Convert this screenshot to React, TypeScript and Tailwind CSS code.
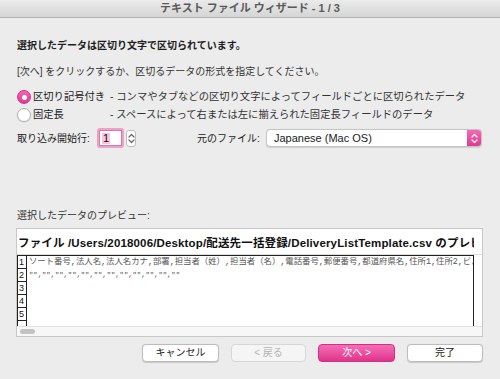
import React from "react";

const FONT = '"Liberation Sans", "Noto Sans CJK JP", sans-serif';
const MONO = '"Liberation Mono", "Noto Sans CJK JP", monospace';

function Radio({ checked }: { checked: boolean }) {
  return checked ? (
    <div className="w-[14px] h-[14px] rounded-full bg-gradient-to-b from-[#f065b0] to-[#e03a93] border border-[#d23088] flex items-center justify-center">
      <div className="w-[5px] h-[5px] rounded-full bg-white" />
    </div>
  ) : (
    <div className="w-[14px] h-[14px] rounded-full bg-white border border-[#b4b4b4] shadow-[0_0.5px_1px_rgba(0,0,0,0.15)]" />
  );
}

function Chevrons({ color }: { color: string }) {
  return (
    <svg width="7" height="11" viewBox="0 0 7 11" fill="none">
      <path d="M1 4 L3.5 1.5 L6 4" stroke={color} strokeWidth="1.2" strokeLinecap="round" strokeLinejoin="round" />
      <path d="M1 7 L3.5 9.5 L6 7" stroke={color} strokeWidth="1.2" strokeLinecap="round" strokeLinejoin="round" />
    </svg>
  );
}

export default function App() {
  const rows = [
    "ソート番号,法人名,法人名カナ,部署,担当者（姓）,担当者（名）,電話番号,郵便番号,都道府県名,住所1,住所2,ビル名,備考",
    '"","","","","","","","","","","",""',
    "",
    "",
    "",
    "",
  ];
  return (
    <div className="w-[500px] h-[379px] bg-[#ececec] flex flex-col overflow-hidden" style={{ fontFamily: FONT }}>
      <div className="h-[18px] shrink-0 bg-gradient-to-b from-[#ebebeb] to-[#d5d5d5] border-b border-[#b3b3b3] flex items-center justify-center text-[11px] font-bold text-[#5a5a5a] leading-none">
        テキスト ファイル ウィザード - 1 / 3
      </div>
      <div className="px-[17px] pt-[21px] flex flex-col">
        <div className="h-[14px] leading-[14px] text-[10px] font-bold text-[#1e1e1e]">
          選択したデータは区切り文字で区切られています。
        </div>
        <div className="mt-[12px] h-[14px] leading-[14px] text-[10px] text-[#333333]">
          [次へ] をクリックするか、区切るデータの形式を指定してください。
        </div>
        <div className="mt-[9px] flex flex-col">
          <div className="h-[18px] flex items-center">
            <div className="w-[93px] flex items-center gap-[2px]">
              <Radio checked />
              <span className="text-[10.3px] text-[#222222]">区切り記号付き</span>
            </div>
            <span className="text-[10.3px] text-[#333333]">- コンマやタブなどの区切り文字によってフィールドごとに区切られたデータ</span>
          </div>
          <div className="h-[18px] flex items-center">
            <div className="w-[93px] flex items-center gap-[2px]">
              <Radio checked={false} />
              <span className="text-[10.3px] text-[#222222]">固定長</span>
            </div>
            <span className="text-[10.3px] text-[#333333]">- スペースによって右または左に揃えられた固定長フィールドのデータ</span>
          </div>
        </div>
        <div className="mt-[4px] h-[20px] flex items-center">
          <span className="w-[80px] text-[10px] text-[#222222]">取り込み開始行:</span>
          <div className="w-[27px] h-[20px] rounded-[3px] bg-[#f0a0c8] p-[2px]">
            <div className="w-full h-full bg-white border border-[#d77aa8] flex items-center pl-[2px]">
              <span className="bg-[#f6c5de] text-[11px] leading-[11px] text-[#111111] px-[1px]">1</span>
            </div>
          </div>
          <div className="ml-[2px] w-[10px] h-[17px] rounded-[3px] bg-white border border-[#bdbdbd] flex items-center justify-center">
            <Chevrons color="#666666" />
          </div>
          <span className="ml-[61px] w-[69px] text-[10px] text-[#222222]">元のファイル:</span>
          <div className="w-[216px] h-[18px] rounded-[4px] bg-white border border-[#c4c4c4] shadow-[0_0.5px_1px_rgba(0,0,0,0.12)] flex items-center overflow-hidden">
            <span className="flex-1 pl-[7px] text-[11px] text-[#222222]">Japanese (Mac OS)</span>
            <div className="w-[14px] h-full bg-gradient-to-b from-[#f26ab4] to-[#e0378f] flex items-center justify-center">
              <Chevrons color="#ffffff" />
            </div>
          </div>
        </div>
        <div className="mt-[61px] h-[14px] leading-[14px] text-[10px] text-[#333333]">
          選択したデータのプレビュー:
        </div>
        <div className="mt-[5px] -ml-px w-[467px] h-[109px] bg-white border border-[#c8c8c8] flex flex-col overflow-hidden">
          <div className="h-[26px] shrink-0 flex items-center pl-px border-b border-[#dddddd]">
            <div className="w-[456px] overflow-hidden whitespace-nowrap">
              <span className="text-[11.5px] tracking-[0.15px] font-bold text-[#111111]">
                ファイル /Users/2018006/Desktop/配送先一括登録/DeliveryListTemplate.csv のプレビュー
              </span>
            </div>
          </div>
          <div className="flex-1 flex min-h-0">
            <div className="w-[457px] border-l border-t border-r border-[#222222] flex flex-col overflow-hidden">
              {rows.map((r, i) => (
                <div key={i} className="h-[13px] shrink-0 flex">
                  <div className={"w-[9px] shrink-0 border-r border-[#222222] text-[9px] leading-[12px] text-[#111111] pl-[1px] " + (i < 5 ? "border-b" : "")}>
                    {i < 5 ? i + 1 : ""}
                  </div>
                  <div
                    className={"pl-[2px] whitespace-nowrap overflow-hidden leading-[13px] text-[#555555] " + (i === 1 ? "text-[7.2px]" : "text-[8.4px]")}
                    style={{ fontFamily: MONO }}
                  >
                    {r}
                  </div>
                </div>
              ))}
            </div>
          </div>
          <div className="h-[10px] shrink-0 bg-[#f7f7f7] border-t border-[#e2e2e2] flex items-center pl-[3px]">
            <div className="w-[15px] h-[5px] rounded-full bg-[#c2c2c2]" />
          </div>
        </div>
        <div className="mt-[7px] flex justify-end gap-[12px] pr-0">
          <button className="w-[77px] h-[18px] rounded-[4px] bg-white border border-[#bcbcbc] shadow-[0_0.5px_1px_rgba(0,0,0,0.15)] text-[10px] text-[#1a1a1a] leading-none">
            キャンセル
          </button>
          <button className="w-[75px] h-[18px] rounded-[4px] bg-[#f5f5f5] border border-[#d6d6d6] text-[10px] text-[#b3b3b3] leading-none">
            &lt; 戻る
          </button>
          <button className="w-[77px] h-[18px] rounded-[4px] bg-gradient-to-b from-[#f46db6] to-[#e0318c] border border-[#d52d85] text-[10px] text-white leading-none">
            次へ &gt;
          </button>
          <button className="w-[76px] h-[18px] rounded-[4px] bg-white border border-[#bcbcbc] shadow-[0_0.5px_1px_rgba(0,0,0,0.15)] text-[10px] text-[#1a1a1a] leading-none">
            完了
          </button>
        </div>
      </div>
    </div>
  );
}
